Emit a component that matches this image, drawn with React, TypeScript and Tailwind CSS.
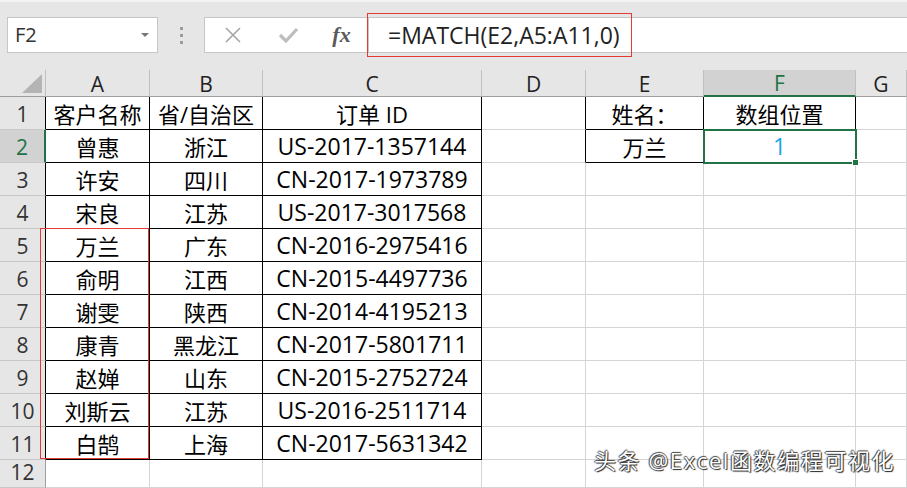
import React from "react";

const colW = [46, 104, 113, 219, 104, 118, 152, 51];
const letters = ["", "A", "B", "C", "D", "E", "F", "G"];

const data: string[][] = [
  ["客户名称", "省/自治区", "订单 ID", "", "姓名：", "数组位置", ""],
  ["曾惠", "浙江", "US-2017-1357144", "", "万兰", "1", ""],
  ["许安", "四川", "CN-2017-1973789", "", "", "", ""],
  ["宋良", "江苏", "US-2017-3017568", "", "", "", ""],
  ["万兰", "广东", "CN-2016-2975416", "", "", "", ""],
  ["俞明", "江西", "CN-2015-4497736", "", "", "", ""],
  ["谢雯", "陕西", "CN-2014-4195213", "", "", "", ""],
  ["康青", "黑龙江", "CN-2017-5801711", "", "", "", ""],
  ["赵婵", "山东", "CN-2015-2752724", "", "", "", ""],
  ["刘斯云", "江苏", "US-2016-2511714", "", "", "", ""],
  ["白鹄", "上海", "CN-2017-5631342", "", "", "", ""],
  ["", "", "", "", "", "", ""],
];

function inBox(c: number, r: number) {
  if (c >= 1 && c <= 3 && r >= 1 && r <= 11) return true;
  if (c >= 5 && c <= 6 && r >= 1 && r <= 2) return true;
  return false;
}

const isCJK = (s: string) => /[\u4e00-\u9fff]/.test(s);

const FONT = "font-['Open_Sans','Noto_Sans_CJK_SC',sans-serif]";

export default function App() {
  return (
    <div className={`relative w-[907px] h-[488px] overflow-hidden bg-white ${FONT}`}>
      {/* toolbar */}
      <div className="h-[70px] bg-[#e6e6e6] border-t-2 border-[#f3f3f3] flex items-start pt-[15px] pl-[7px]">
        <div className="w-[151px] h-[36px] bg-white border border-[#c6c6c6] flex items-center justify-between pl-[7px] pr-[8px]">
          <span className="text-[20px] text-[#333] leading-none">F2</span>
          <svg width="8" height="5" viewBox="0 0 8 5">
            <path d="M0 0 L8 0 L4 4 Z" fill="#777" />
          </svg>
        </div>
        <div className="w-[46px] h-[36px] flex flex-col items-center justify-center gap-[4px]">
          <div className="w-[3px] h-[3px] bg-[#9c9c9c]" />
          <div className="w-[3px] h-[3px] bg-[#9c9c9c]" />
          <div className="w-[3px] h-[3px] bg-[#9c9c9c]" />
        </div>
        <div className="flex-1 h-[36px] bg-white border border-[#c6c6c6] border-r-0 flex items-center">
          <div className="w-[163px] h-full flex items-center">
            <div className="w-[56px] flex justify-center">
              <svg width="18" height="18" viewBox="0 0 18 18">
                <path d="M2 2 L16 16 M16 2 L2 16" stroke="#a6a6a6" strokeWidth="1.6" />
              </svg>
            </div>
            <div className="w-[54px] flex justify-center">
              <svg width="21" height="18" viewBox="0 0 21 18">
                <path d="M2 9 L8 15 L19 3" stroke="#bdbdbd" strokeWidth="3.2" fill="none" />
              </svg>
            </div>
            <div className="w-[53px] flex justify-center">
              <span className="font-['Liberation_Serif',serif] italic text-[22px] text-[#5a5a5a] leading-none font-bold">fx</span>
            </div>
          </div>
          <div className="flex-1 h-full border-l border-[#c6c6c6] flex items-center pl-[19px]">
            <span className="text-[23px] text-[#222] leading-none">=MATCH(E2,A5:A11,0)</span>
          </div>
        </div>
      </div>

      {/* grid header row */}
      <div className="flex h-[27px] bg-[#e6e6e6]">
        {colW.map((w, c) => {
          if (c === 0) {
            return (
              <div key={c} style={{ width: w }} className="relative h-full border-r border-b border-r-[#c0c0c0] border-b-[#9e9e9e]">
                <svg className="absolute right-[3px] bottom-[3px]" width="20" height="19" viewBox="0 0 20 19">
                  <path d="M20 0 L20 19 L0 19 Z" fill="#b4b4b4" />
                </svg>
              </div>
            );
          }
          if (c === 6) {
            return (
              <div key={c} style={{ width: w }} className="h-full bg-[#d2d2d2] border-r border-r-[#c0c0c0] border-b-2 border-b-[#217346] flex items-center justify-center text-[21px] text-[#217346] leading-none pt-[2px]">
                {letters[c]}
              </div>
            );
          }
          return (
            <div key={c} style={{ width: w }} className="h-full border-r border-b border-r-[#c0c0c0] border-b-[#9e9e9e] flex items-center justify-center text-[21px] text-[#222] leading-none pt-[3px]">
              {letters[c]}
            </div>
          );
        })}
      </div>

      {/* rows */}
      {data.map((row, ri) => {
        const r = ri + 1;
        const h = r === 12 ? 28 : 33;
        return (
          <div key={r} className="flex" style={{ height: h }}>
            {r === 2 ? (
              <div style={{ width: colW[0] }} className="h-full bg-[#d2d2d2] border-r-2 border-r-[#217346] border-b border-b-[#c8c8c8] flex items-end justify-center pb-[4px] text-[21px] text-[#217346] leading-none">
                {r}
              </div>
            ) : (
              <div
                style={{ width: colW[0] }}
                className={`h-full bg-[#e6e6e6] border-r border-b border-b-[#c8c8c8] flex items-end justify-center pb-[4px] text-[21px] text-[#333] leading-none ${inBox(1, r) ? "border-r-black" : "border-r-[#9e9e9e]"}`}
              >
                {r}
              </div>
            )}
            {colW.slice(1).map((w, i) => {
              const c = i + 1;
              const txt = row[i] ?? "";
              const right = inBox(c, r) || inBox(c + 1, r) ? "border-r-black" : "border-r-[#d4d4d4]";
              const bottom = inBox(c, r) || inBox(c, r + 1) ? "border-b-black" : "border-b-[#d4d4d4]";
              const blue = r === 2 && c === 6;
              const size = isCJK(txt) ? "text-[22px]" : "text-[23px]";
              return (
                <div
                  key={c}
                  style={{ width: w }}
                  className={`h-full border-r border-b ${right} ${bottom} flex items-center justify-center pt-[1px] ${size} leading-none whitespace-nowrap overflow-visible ${blue ? "text-[#1aa3e8]" : "text-black"}`}
                >
                  {txt}
                </div>
              );
            })}
          </div>
        );
      })}

      {/* red box around formula */}
      <div className="absolute left-[367px] top-[13px] w-[265px] h-[44px] border-[1.5px] border-[#e53935]" />
      {/* red box around A5:A11 */}
      <div className="absolute left-[40px] top-[228px] w-[109px] h-[231px] border-[1.5px] border-[#e53935]" />
      {/* F2 selection */}
      <div className="absolute left-[703px] top-[129px] w-[154px] h-[35px] border-2 border-[#217346]" />
      <div className="absolute left-[852px] top-[159px] w-[7px] h-[7px] bg-[#217346] border border-white" />

      {/* watermark */}
      <div className="absolute left-[594px] top-[449px] text-[22px] tracking-[1.6px] leading-none text-white whitespace-nowrap [text-shadow:1px_1px_1px_#222,-1px_0_1px_#444,0_-1px_1px_#444]">
        头条 @Excel函数编程可视化
      </div>
    </div>
  );
}
